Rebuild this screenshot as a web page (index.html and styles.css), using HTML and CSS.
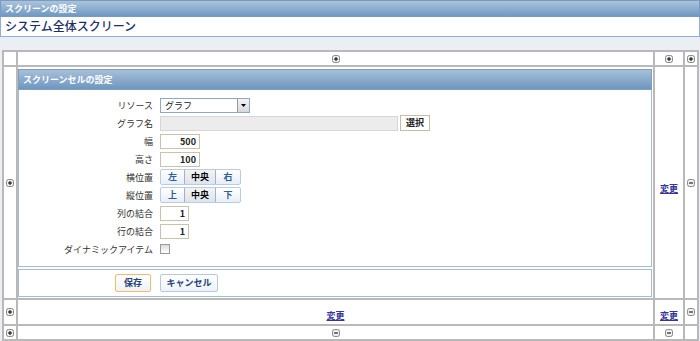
FILE: index.html
```html
<!DOCTYPE html>
<html lang="ja">
<head>
<meta charset="utf-8">
<link rel="stylesheet" href="styles.css">
</head>
<body>
<div class="hdr">スクリーンの設定</div>
<div class="title">システム全体スクリーン</div>
<div class="gap"></div>
<table class="grid">
  <colgroup><col class="c1"><col class="c2"><col class="c3"><col class="c4"></colgroup>
  <tr class="r1">
    <td></td>
    <td class="ctr"><svg class="ico" viewBox="0 0 8 8"><rect x="0.5" y="0.5" width="7" height="7" rx="2" fill="#eee" stroke="#888"/><path d="M2 4h4M4 2v4" stroke="#000" stroke-width="1"/></svg></td>
    <td class="ctr"><svg class="ico" viewBox="0 0 8 8"><rect x="0.5" y="0.5" width="7" height="7" rx="2" fill="#eee" stroke="#888"/><path d="M2 4h4M4 2v4" stroke="#000" stroke-width="1"/></svg></td>
    <td class="ctr"><svg class="ico" viewBox="0 0 8 8"><rect x="0.5" y="0.5" width="7" height="7" rx="2" fill="#eee" stroke="#888"/><path d="M2 4h4M4 2v4" stroke="#000" stroke-width="1"/></svg></td>
  </tr>
  <tr class="r2">
    <td class="ctr"><svg class="ico" viewBox="0 0 8 8"><rect x="0.5" y="0.5" width="7" height="7" rx="2" fill="#eee" stroke="#888"/><path d="M2 4h4M4 2v4" stroke="#000" stroke-width="1"/></svg></td>
    <td class="main">
      <div class="panel">
        <div class="phdr">スクリーンセルの設定</div>
        <div class="pbody">
          <div class="lbl">リソース</div>
          <div class="ctl"><div class="select"><span>グラフ</span><span class="arrow"><svg viewBox="0 0 9 9" width="9" height="9"><path d="M2 3h5L4.5 6z" fill="#000"/></svg></span></div></div>
          <div class="lbl">グラフ名</div>
          <div class="ctl"><div class="inp wide dis"></div><div class="btn-sel">選択</div></div>
          <div class="lbl">幅</div>
          <div class="ctl"><div class="inp num">500</div></div>
          <div class="lbl">高さ</div>
          <div class="ctl"><div class="inp num">100</div></div>
          <div class="lbl">横位置</div>
          <div class="ctl"><div class="seg"><span class="s1">左</span><span class="s2 on">中央</span><span class="s3">右</span></div></div>
          <div class="lbl">縦位置</div>
          <div class="ctl"><div class="seg"><span class="s1">上</span><span class="s2 on">中央</span><span class="s3">下</span></div></div>
          <div class="lbl">列の結合</div>
          <div class="ctl"><div class="inp small">1</div></div>
          <div class="lbl">行の結合</div>
          <div class="ctl"><div class="inp small">1</div></div>
          <div class="lbl">ダイナミックアイテム</div>
          <div class="ctl"><div class="chk"></div></div>
        </div>
        <div class="pfoot">
          <div class="btn save">保存</div>
          <div class="btn cancel">キャンセル</div>
        </div>
      </div>
    </td>
    <td class="mid"><a class="lnk" href="#">変更</a></td>
    <td class="ctr"><svg class="ico" viewBox="0 0 8 8"><rect x="0.5" y="0.5" width="7" height="7" rx="2" fill="#eee" stroke="#888"/><path d="M2 4h4" stroke="#000" stroke-width="1"/></svg></td>
  </tr>
  <tr class="r3">
    <td class="ctr"><svg class="ico" viewBox="0 0 8 8"><rect x="0.5" y="0.5" width="7" height="7" rx="2" fill="#eee" stroke="#888"/><path d="M2 4h4M4 2v4" stroke="#000" stroke-width="1"/></svg></td>
    <td class="bot"><a class="lnk" href="#">変更</a></td>
    <td class="bot"><a class="lnk" href="#">変更</a></td>
    <td class="ctr"><svg class="ico" viewBox="0 0 8 8"><rect x="0.5" y="0.5" width="7" height="7" rx="2" fill="#eee" stroke="#888"/><path d="M2 4h4" stroke="#000" stroke-width="1"/></svg></td>
  </tr>
  <tr class="r4">
    <td class="ctr"><svg class="ico" viewBox="0 0 8 8"><rect x="0.5" y="0.5" width="7" height="7" rx="2" fill="#eee" stroke="#888"/><path d="M2 4h4M4 2v4" stroke="#000" stroke-width="1"/></svg></td>
    <td class="ctr"><svg class="ico" viewBox="0 0 8 8"><rect x="0.5" y="0.5" width="7" height="7" rx="2" fill="#eee" stroke="#888"/><path d="M2 4h4" stroke="#000" stroke-width="1"/></svg></td>
    <td class="ctr"><svg class="ico" viewBox="0 0 8 8"><rect x="0.5" y="0.5" width="7" height="7" rx="2" fill="#eee" stroke="#888"/><path d="M2 4h4" stroke="#000" stroke-width="1"/></svg></td>
    <td></td>
  </tr>
</table>
</body>
</html>
```

FILE: styles.css
```css
* { box-sizing: border-box; }
html, body { margin: 0; padding: 0; }
body {
  width: 700px;
  height: 341px;
  background: #ebeef2;
  font-family: "Noto Sans CJK JP", "DejaVu Sans", sans-serif;
  font-size: 9px;
  color: #222;
  overflow: hidden;
}
.hdr {
  height: 17px;
  background: linear-gradient(#abc4dc, #7098c2);
  border: 1px solid #7b9bbe;
  color: #fff;
  font-weight: bold;
  font-size: 9px;
  line-height: 15px;
  padding-left: 4px;
}
.title {
  height: 20px;
  background: #fff;
  border: 1px solid #8fb0d2;
  border-top: none;
  color: #1a2f6a;
  font-size: 12px;
  font-weight: 500;
  line-height: 18px;
  padding-left: 4px;
}
.gap { height: 13px; }
.grid {
  margin-left: 2px;
  width: 697px;
  border-collapse: collapse;
  table-layout: fixed;
  background: #fff;
}
.grid td {
  border: 2px solid #b9b9b9;
  padding: 0;
}
.c1 { width: 14px; }
.c3 { width: 30px; }
.c4 { width: 14px; }
.r1 td { height: 15px; }
.r2 td { height: 232px; }
.r3 td { height: 26px; }
.r4 td { height: 15px; }
.ctr { text-align: center; vertical-align: middle; line-height: 0; }
.bot { text-align: center; vertical-align: bottom; padding-bottom: 2px !important; }
.mid { text-align: center; vertical-align: middle; padding-top: 12px !important; }
.ico { width: 8px; height: 8px; display: inline-block; }
.lnk {
  color: #35359a;
  font-weight: bold;
  font-size: 9px;
  line-height: 11px;
}
.main { vertical-align: top; padding: 1px 1px 1px 0 !important; }
.panel { display: flex; flex-direction: column; }
.phdr {
  height: 21px;
  margin-top: 1px;
  background: linear-gradient(#a7c0d9, #6e96c0);
  border: 1px solid #7f9fc1;
  color: #fff;
  font-weight: bold;
  font-size: 9px;
  line-height: 19px;
  padding-left: 4px;
}
.pbody {
  border: 1px solid #a4bcd6;
  border-top: none;
  display: grid;
  grid-template-columns: 134px 1fr;
  column-gap: 7px;
  grid-auto-rows: 18px;
  padding: 6px 0 7px;
  height: 177px;
}
.lbl {
  text-align: right;
  align-self: center;
  font-size: 9px;
  color: #333;
  font-weight: normal;
}
.ctl { display: flex; align-items: center; gap: 2px; }
.select {
  width: 90px;
  height: 15px;
  border: 1px solid #8ea8c8;
  background: #fff;
  display: flex;
  align-items: center;
  justify-content: space-between;
  padding-left: 4px;
  font-size: 9px;
}
.arrow {
  width: 12px;
  height: 13px;
  background: linear-gradient(#f4f4f4, #d8d8d8);
  border-left: 1px solid #999;
  display: flex;
  align-items: center;
  justify-content: center;
}
.inp {
  height: 15px;
  border: 1px solid #c9c2b0;
  background: #fff;
  font-size: 9px;
  font-weight: bold;
  line-height: 13px;
  text-align: right;
  padding-right: 3px;
}
.wide { width: 238px; }
.dis { background: #ececec; border-color: #d6d6d6; }
.num { width: 40px; }
.small { width: 29px; }
.btn-sel {
  height: 16px;
  width: 30px;
  border: 1px solid #c3bea8;
  background: #fff;
  font-size: 9px;
  line-height: 14px;
  text-align: center;
  font-weight: bold;
}
.seg {
  display: flex;
  height: 16px;
  border: 1px solid #b9cce2;
  border-radius: 2px;
  background: linear-gradient(#fff, #e8eef7);
}
.seg span {
  font-size: 9px;
  font-weight: bold;
  color: #2e5f9c;
  line-height: 14px;
  text-align: center;
}
.s1 { width: 23px; }
.s2 { width: 32px; border-left: 1px solid #b9cce2; border-right: 1px solid #b9cce2; }
.s3 { width: 24px; }
.seg .on { color: #000; background: linear-gradient(#f3f3f3, #dde4ee); border-color: #9fb2cb; }
.chk {
  width: 10px;
  height: 10px;
  border: 1px solid #9a9a9a;
  background: linear-gradient(#dcdcdc, #fff);
}
.pfoot {
  margin-top: 2px;
  height: 28px;
  border: 1px solid #a4bcd6;
  display: flex;
  align-items: center;
  padding-left: 96px;
  gap: 9px;
}
.btn {
  height: 18px;
  border: 1px solid #b8c9dc;
  border-radius: 2px;
  background: linear-gradient(#fff, #eef2f8);
  font-size: 9px;
  font-weight: bold;
  color: #25427a;
  line-height: 16px;
  text-align: center;
}
.save { width: 36px; border-color: #f3bc6b; }
.cancel { width: 58px; }
```
